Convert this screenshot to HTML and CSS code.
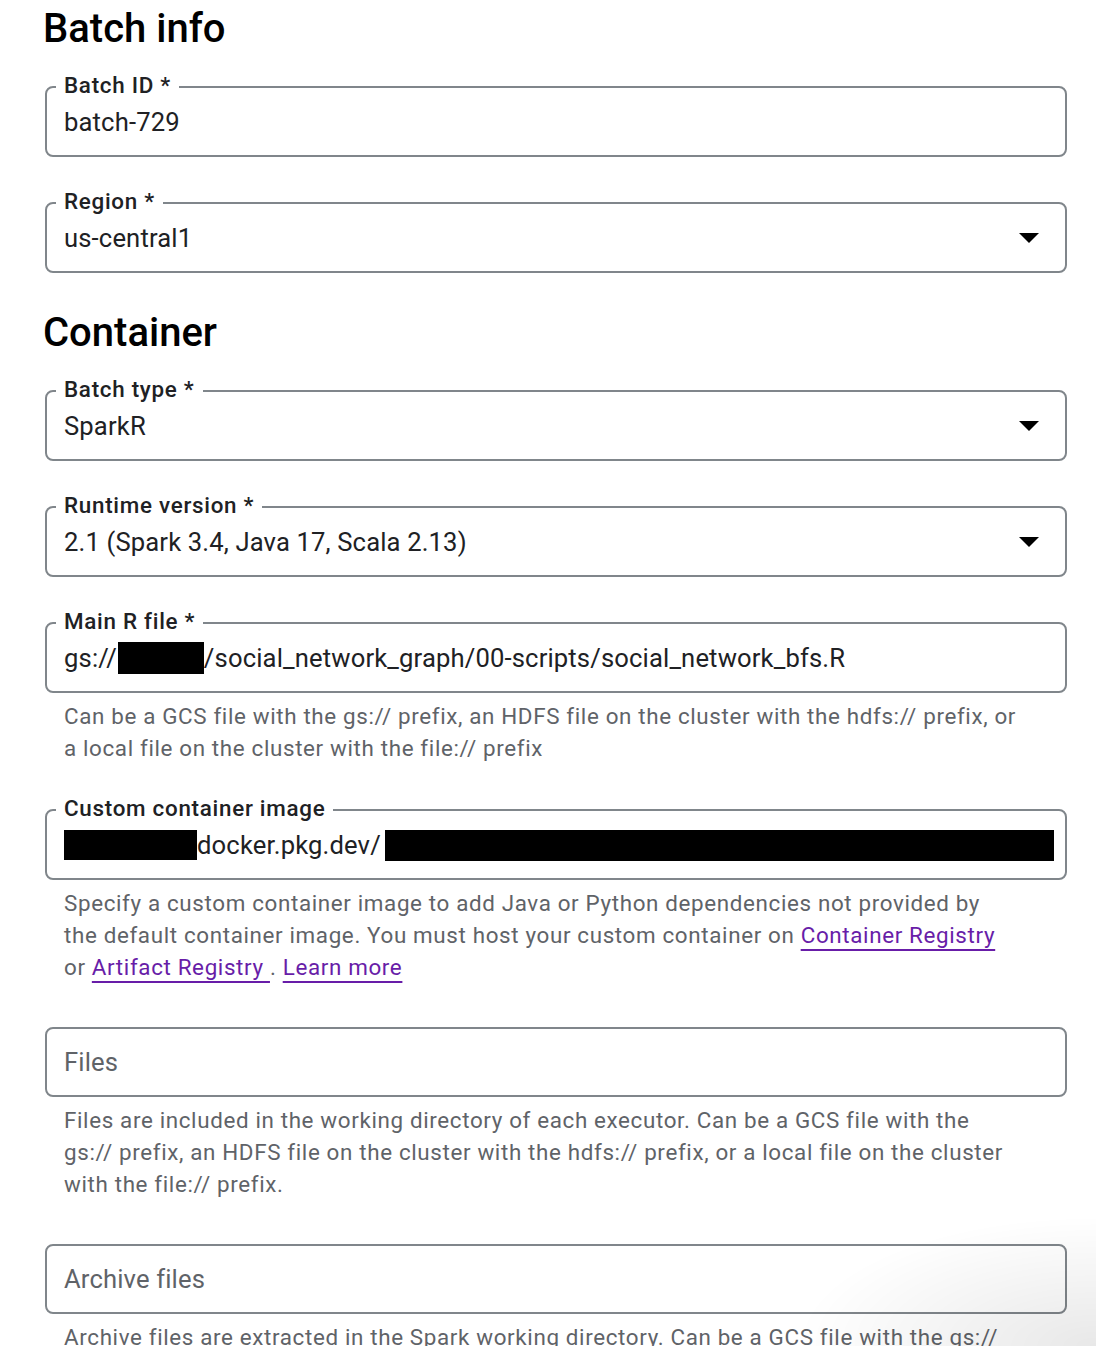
FILE: index.html
```html
<!DOCTYPE html>
<html lang="en">
<head>
<meta charset="utf-8">
<title>Batch info</title>
<link rel="stylesheet" href="styles.css">
</head>
<body>
<main class="page">
  <h2 class="section-title">Batch info</h2>

  <fieldset class="field">
    <legend class="field-label">Batch ID *</legend>
    <div class="field-value">batch-729</div>
  </fieldset>

  <fieldset class="field">
    <legend class="field-label">Region *</legend>
    <div class="field-value select">
      <span>us-central1</span>
      <span class="caret"></span>
    </div>
  </fieldset>

  <h2 class="section-title second">Container</h2>

  <fieldset class="field">
    <legend class="field-label">Batch type *</legend>
    <div class="field-value select">
      <span>SparkR</span>
      <span class="caret"></span>
    </div>
  </fieldset>

  <fieldset class="field">
    <legend class="field-label">Runtime version *</legend>
    <div class="field-value select">
      <span>2.1 (Spark 3.4, Java 17, Scala 2.13)</span>
      <span class="caret"></span>
    </div>
  </fieldset>

  <div class="group">
    <fieldset class="field tight">
      <legend class="field-label">Main R file *</legend>
      <div class="field-value">gs://<span class="redact r1"></span>/social_network_graph/00-scripts/social_network_bfs.R</div>
    </fieldset>
    <p class="hint">Can be a GCS file with the gs:// prefix, an HDFS file on the cluster with the hdfs:// prefix, or a local file on the cluster with the file:// prefix</p>
  </div>

  <div class="group">
    <fieldset class="field tight">
      <legend class="field-label">Custom container image</legend>
      <div class="field-value"><span class="redact r2"></span>docker.pkg.dev/<span class="redact r3"></span></div>
    </fieldset>
    <p class="hint">Specify a custom container image to add Java or Python dependencies not provided by the default container image. You must host your custom container on <a class="link" href="#">Container Registry</a> or <a class="link" href="#">Artifact Registry </a>. <a class="link" href="#">Learn more</a></p>
  </div>

  <div class="group plain">
    <div class="box">Files</div>
    <p class="hint">Files are included in the working directory of each executor. Can be a GCS file with the gs:// prefix, an HDFS file on the cluster with the hdfs:// prefix, or a local file on the cluster with the file:// prefix.</p>
  </div>

  <div class="group plain">
    <div class="box">Archive files</div>
    <p class="hint">Archive files are extracted in the Spark working directory. Can be a GCS file with the gs:// prefix, an HDFS file on the cluster with the hdfs:// prefix, or a local file on the cluster with the file:// prefix.</p>
  </div>
</main>
<div class="corner-shade"></div>
</body>
</html>
```

FILE: styles.css
```css
html, body {
  margin: 0;
  padding: 0;
  background: #ffffff;
}

body {
  font-family: Roboto, "Liberation Sans", Arial, sans-serif;
  color: #202124;
  overflow: hidden;
}

.page {
  width: 1022px;
  padding: 5px 0 0 45px;
}

.section-title {
  margin: 0 0 20px -2px;
  font-size: 40px;
  line-height: 48px;
  font-weight: 500;
  color: #000000;
}

.section-title.second {
  margin-top: 36px;
}

.field {
  margin: 0 0 32px 0;
  padding: 0 26px 17px 17px;
  border: 2px solid #80868b;
  border-radius: 8px;
  min-width: 0;
}

.field.tight {
  margin-bottom: 0;
}

.field-label {
  margin-left: -8px;
  padding: 0 8px 4px 8px;
  font-size: 22.4px;
  line-height: 24px;
  letter-spacing: 0.72px;
  font-weight: 500;
  color: #202124;
}

.field-value {
  margin-top: 5px;
  font-size: 25.6px;
  line-height: 32px;
  letter-spacing: 0.15px;
  color: #202124;
  white-space: nowrap;
}

.select {
  display: flex;
  align-items: center;
  justify-content: space-between;
}

.caret {
  width: 0;
  height: 0;
  border-left: 10px solid transparent;
  border-right: 10px solid transparent;
  border-top: 10px solid #000000;
}

.redact {
  display: inline-block;
  background: #000000;
  vertical-align: top;
}

.r1 {
  width: 86px;
  height: 32px;
  margin-left: 1px;
}

.r2 {
  width: 133px;
  height: 30px;
  margin-top: 1px;
}

.r3 {
  width: 669px;
  height: 31px;
  margin-top: 1px;
  margin-left: 4px;
}

.group {
  margin-bottom: 32px;
}

.group.plain {
  padding-top: 12px;
}

.hint {
  margin: 0;
  padding: 7px 0 0 19px;
  max-width: 953px;
  font-size: 22.4px;
  line-height: 32px;
  letter-spacing: 0.64px;
  color: #5f6368;
}

.link {
  color: #681da8;
  text-decoration: underline;
  text-decoration-thickness: 2px;
  text-underline-offset: 6px;
}

.box {
  height: 70px;
  box-sizing: border-box;
  border: 2px solid #80868b;
  border-radius: 8px;
  padding-left: 17px;
  display: flex;
  align-items: center;
  font-size: 25.6px;
  letter-spacing: 0.15px;
  color: #5f6368;
}

.corner-shade {
  position: fixed;
  right: 0;
  bottom: 0;
  width: 320px;
  height: 160px;
  pointer-events: none;
  background: radial-gradient(ellipse 300px 130px at 100% 100%, rgba(0, 0, 0, 0.09), rgba(0, 0, 0, 0) 100%);
}
```
